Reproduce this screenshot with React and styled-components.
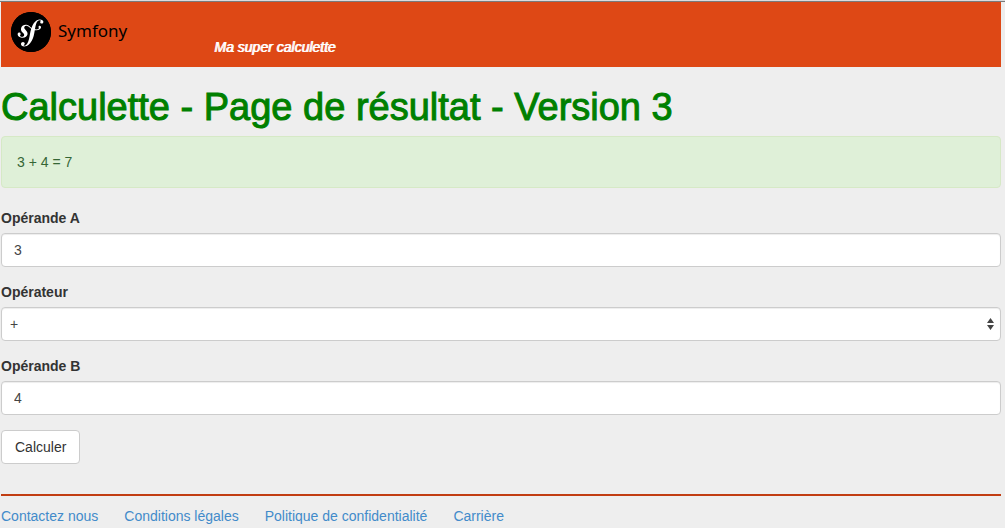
import React, { useState } from "react";
import styled, { createGlobalStyle, css } from "styled-components";
import { SiSymfony } from "react-icons/si";

const GlobalStyle = createGlobalStyle`
  *, *::before, *::after { box-sizing: border-box; }
  body {
    margin: 0;
    background: #eeeeee;
    color: #333333;
    font-family: "Liberation Sans", Arial, sans-serif;
    font-size: 14px;
    line-height: 20px;
  }
`;

const TopRule = styled.div`
  height: 2px;
  background: #dcdcdc;
  border-bottom: 1px solid #7a7a7a;
`;

const Page = styled.div`
  padding: 0 4px 0 1px;
`;

const Header = styled.header`
  display: flex;
  height: 65px;
  padding: 10px;
  background: #de4815;
`;

const Brand = styled.div`
  display: flex;
  flex: 0 0 203px;
  gap: 7px;
  height: 40px;
  color: #000000;
`;

const Emblem = styled.span`
  display: flex;
  border-radius: 50%;
  background: radial-gradient(circle, #ffffff 65%, #000000 66%);
`;

const BrandName = styled.span`
  font-family: "Noto Sans", "Open Sans", sans-serif;
  font-size: 17px;
  line-height: 38px;
`;

const Tagline = styled.em`
  align-self: flex-end;
  color: #ffffff;
  text-shadow: 1px 0 0 #ffffff;
`;

const Title = styled.h1`
  margin: 20px 0 9px;
  color: #008000;
  font-size: 38px;
  font-weight: normal;
  line-height: 40px;
  -webkit-text-stroke: 1px #008000;
`;

const Result = styled.div`
  margin-bottom: 20px;
  padding: 15px;
  border: 1px solid #d6e9c6;
  border-radius: 4px;
  background: #dff0d8;
  color: #356635;
`;

const Field = styled.div`
  margin-bottom: 15px;
`;

const Label = styled.label`
  display: block;
  margin-bottom: 5px;
  font-weight: bold;
`;

const control = css`
  display: block;
  width: 100%;
  height: 34px;
  border: 1px solid #cccccc;
  border-radius: 4px;
  background: #ffffff;
  box-shadow: inset 0 1px 1px rgba(0, 0, 0, 0.075);
  color: #444444;
  font: inherit;
`;

const Input = styled.input`
  ${control}
  padding: 6px 12px;
`;

const SelectBox = styled.div`
  position: relative;
`;

const Select = styled.select`
  ${control}
  padding: 6px 24px 6px 8px;
  appearance: none;
`;

const Arrows = styled.svg`
  position: absolute;
  top: 11px;
  right: 7px;
  fill: #444444;
  pointer-events: none;
`;

const Button = styled.button`
  height: 34px;
  padding: 6px 13px;
  border: 1px solid #cccccc;
  border-radius: 4px;
  background: #ffffff;
  color: #333333;
  font: inherit;
  cursor: pointer;
`;

const Form = styled.form`
  margin-bottom: 30px;
`;

const Footer = styled.footer`
  display: flex;
  gap: 26px;
  padding-top: 10px;
  border-top: 2px solid #c13d12;
`;

const FooterLink = styled.a`
  color: #428bca;
  text-decoration: none;
`;

const links = [
  "Contactez nous",
  "Conditions légales",
  "Politique de confidentialité",
  "Carrière",
];

const operations = {
  "+": (x, y) => x + y,
  "-": (x, y) => x - y,
  "*": (x, y) => x * y,
  "/": (x, y) => x / y,
};

export default function App() {
  const [a, setA] = useState("3");
  const [operator, setOperator] = useState("+");
  const [b, setB] = useState("4");
  const [result, setResult] = useState("3 + 4 = 7");

  const calculate = (event) => {
    event.preventDefault();
    const value = operations[operator](Number(a), Number(b));
    setResult(`${a} ${operator} ${b} = ${value}`);
  };

  return (
    <>
      <GlobalStyle />
      <TopRule />
      <Page>
        <Header>
          <Brand>
            <Emblem>
              <SiSymfony size={40} aria-hidden="true" />
            </Emblem>
            <BrandName>Symfony</BrandName>
          </Brand>
          <Tagline>Ma super calculette</Tagline>
        </Header>
        <main>
          <Title>Calculette - Page de résultat - Version 3</Title>
          <Result role="status">{result}</Result>
          <Form onSubmit={calculate}>
            <Field>
              <Label htmlFor="operand-a">Opérande A</Label>
              <Input id="operand-a" value={a} onChange={(e) => setA(e.target.value)} />
            </Field>
            <Field>
              <Label htmlFor="operator">Opérateur</Label>
              <SelectBox>
                <Select
                  id="operator"
                  value={operator}
                  onChange={(e) => setOperator(e.target.value)}
                >
                  {Object.keys(operations).map((sign) => (
                    <option key={sign}>{sign}</option>
                  ))}
                </Select>
                <Arrows width="7" height="12" viewBox="0 0 7 12" aria-hidden="true">
                  <path d="M3.5 0 7 5H0ZM0 7H7L3.5 12Z" />
                </Arrows>
              </SelectBox>
            </Field>
            <Field>
              <Label htmlFor="operand-b">Opérande B</Label>
              <Input id="operand-b" value={b} onChange={(e) => setB(e.target.value)} />
            </Field>
            <Button type="submit">Calculer</Button>
          </Form>
        </main>
        <Footer>
          {links.map((text) => (
            <FooterLink key={text} href="#">
              {text}
            </FooterLink>
          ))}
        </Footer>
      </Page>
    </>
  );
}
